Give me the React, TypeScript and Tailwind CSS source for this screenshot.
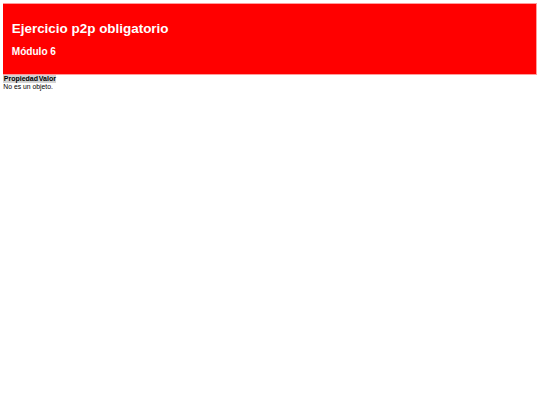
export default function App() {
  return (
    <div className="w-[540px] h-[405px] bg-white p-[3.36px] text-black" style={{ fontFamily: '"Liberation Sans", Arial, sans-serif' }}>
      <div className="bg-[#ff0000] px-[8.4px] pt-[8.4px] pb-[8.6px] border-t border-r border-b border-[#ff9c9c]">
        <h1 className="text-[13.44px] font-bold leading-[15.4px] text-white mt-[8.4px] mb-[9px]">Ejercicio p2p obligatorio</h1>
        <h2 className="text-[10.08px] font-bold leading-[11.6px] text-white mb-[8px]">Módulo 6</h2>
      </div>
      <table className="border-separate border-spacing-[0.84px] text-[7px] leading-[7.7px]">
        <thead>
          <tr>
            <th className="bg-[#d3d3d3] px-[0.42px] py-[0.42px] font-bold">Propiedad</th>
            <th className="bg-[#d3d3d3] px-[0.42px] py-[0.42px] font-bold">Valor</th>
          </tr>
        </thead>
      </table>
      <div className="text-[6.8px] leading-[7.7px]">No es un objeto.</div>
    </div>
  );
}
